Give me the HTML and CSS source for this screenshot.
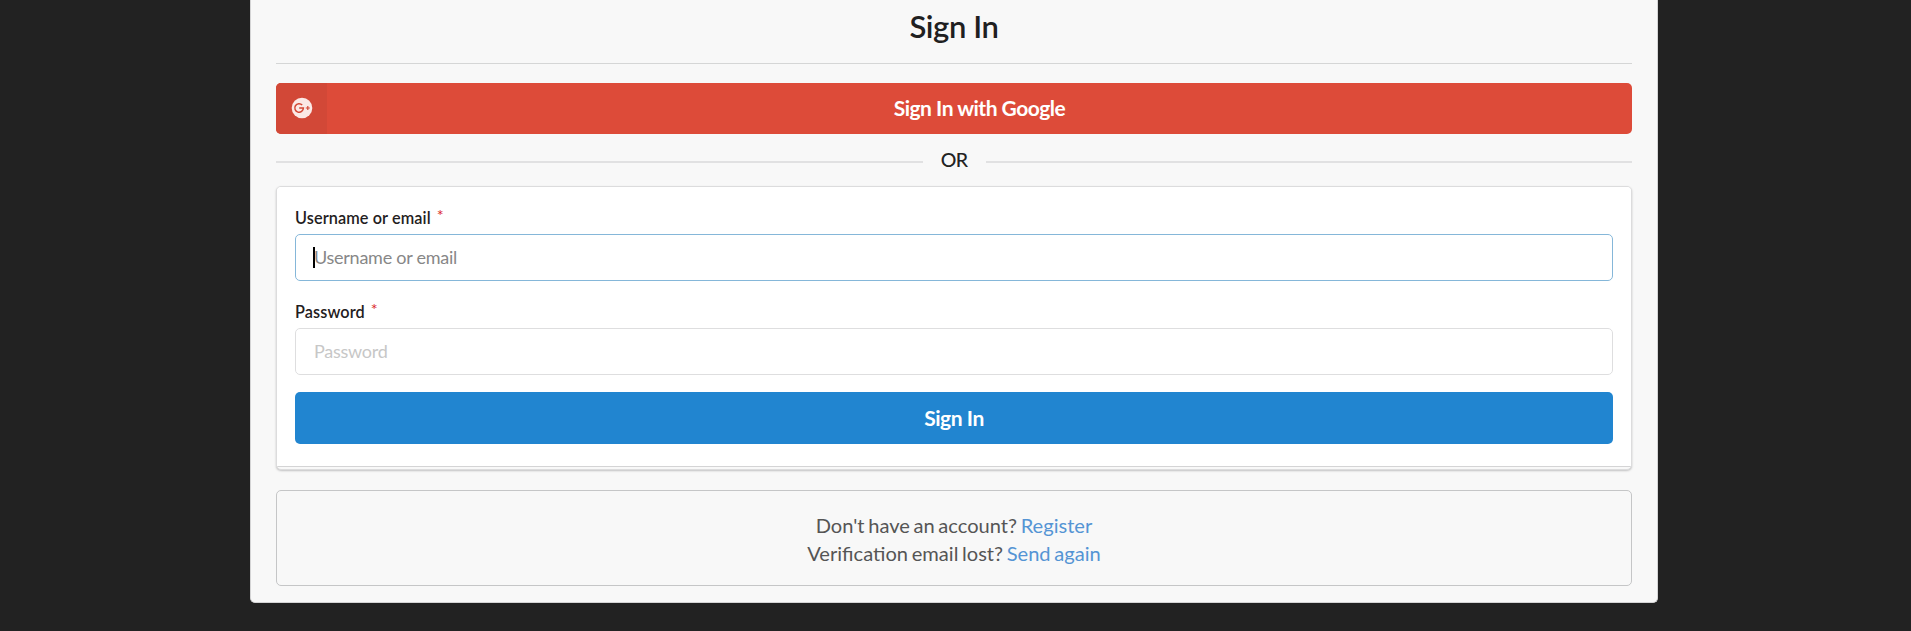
FILE: index.html
```html
<!DOCTYPE html>
<html lang="en">
<head>
<meta charset="utf-8">
<title>Sign In</title>
<link rel="stylesheet" href="styles.css">
</head>
<body>
<main class="panel">
  <h1 class="title">Sign In</h1>
  <button class="google" type="button">
    <span class="google-icon">
      <svg width="22" height="22" viewBox="0 0 22 22">
        <circle cx="11" cy="11" r="10.3" fill="#fbe9e6"/>
        <path d="M11.2 8A4.3 4.3 0 1 0 12.4 11.1H8.2" fill="none" stroke="#d34836" stroke-width="1.5"/>
        <path d="M16.8 9v4M14.8 11h4" stroke="#d34836" stroke-width="1.2"/>
      </svg>
    </span>
    <span class="google-text">Sign In with Google</span>
  </button>
  <div class="or"><span class="or-text">OR</span></div>
  <form class="card">
    <div class="fields">
      <label class="label" for="user">Username or email<span class="star">*</span></label>
      <div class="input focused" id="user"><span class="caret"></span>Username or email</div>
      <label class="label second" for="pass">Password<span class="star">*</span></label>
      <div class="input" id="pass">Password</div>
      <button class="submit" type="button">Sign In</button>
    </div>
  </form>
  <div class="links">
    <div>Don't have an account? <a class="link">Register</a></div>
    <div>Verification email lost? <a class="link">Send again</a></div>
  </div>
</main>
</body>
</html>
```
FILE: styles.css
```css
* { box-sizing: border-box; }
body { margin: 0; background: #222; font-family: Lato, sans-serif; height: 631px; overflow: hidden; }
.panel {
  width: 1408px; height: 603px; margin-left: 250px; padding: 0 25px;
  background: #f8f8f8; border: 1px solid #d4d4d5; border-top: 0; border-radius: 0 0 5px 5px;
}
.title {
  margin: 0 0 19px; height: 64px; padding-top: 7px; border-bottom: 1px solid #d5d6d6;
  font-size: 31px; line-height: 38px; font-weight: 600; letter-spacing: -.4px; text-align: center; color: #1f2021;
}
.google {
  display: flex; width: 100%; height: 51px; padding: 0; border: 0; border-radius: 5px; overflow: hidden;
  background: #dd4b39; color: #fff; font: 700 21px/50px Lato, sans-serif; letter-spacing: -.5px;
}
.google-icon { width: 51px; height: 51px; padding-bottom: 2px; display: flex; align-items: center; justify-content: center; background: #d24837; }
.google-text { flex: 1; text-align: center; }
.or { display: flex; align-items: center; height: 52px; font-size: 19.5px; line-height: 24px; font-weight: 500; letter-spacing: -.6px; color: #222; }
.or::before, .or::after { content: ""; flex: 1; height: 2px; margin-top: 3px; background: #e1e1e2; }
.or-text { width: 63px; text-align: center; }
.card {
  height: 284px; border: 1px solid #dcdcdd; border-radius: 5px; background: #f8f8f8;
  box-shadow: 0 1px 2px rgba(34,36,38,.25); overflow: hidden;
}
.fields { height: 280px; padding: 18px; background: #fff; border-bottom: 1px solid #d4d4d5; }
.label { display: block; height: 29px; padding-top: 3px; font-size: 16.25px; line-height: 20px; font-weight: 600; letter-spacing: .1px; color: #1f2021; }
.label.second { margin-top: 18px; }
.star { margin-left: 6px; color: #db2828; font-weight: 400; vertical-align: 3px; line-height: 0; }
.input {
  height: 47px; padding: 0 18px 1px; border: 1px solid #dededf; border-radius: 5px;
  font-size: 18px; letter-spacing: -.26px; color: #c7c7c7; display: flex; align-items: center;
}
.focused { border-color: #85b7d9; color: #878787; padding-left: 17px; }
.caret { width: 2px; height: 21px; margin-right: -1px; background: #000; }
.submit {
  display: block; width: 100%; height: 52px; margin-top: 17px; padding: 0; border: 0; border-radius: 5px;
  background: #2185d0; color: #fff; font: 700 21px/52px Lato, sans-serif; letter-spacing: -.45px;
}
.links {
  height: 96px; margin-top: 20px; padding-top: 20px; border: 1px solid #c5c6c7; border-radius: 5px;
  font-size: 20.1px; line-height: 28px; word-spacing: -1.5px; text-align: center; color: #555;
}
.link { color: #5494d4; }
```
